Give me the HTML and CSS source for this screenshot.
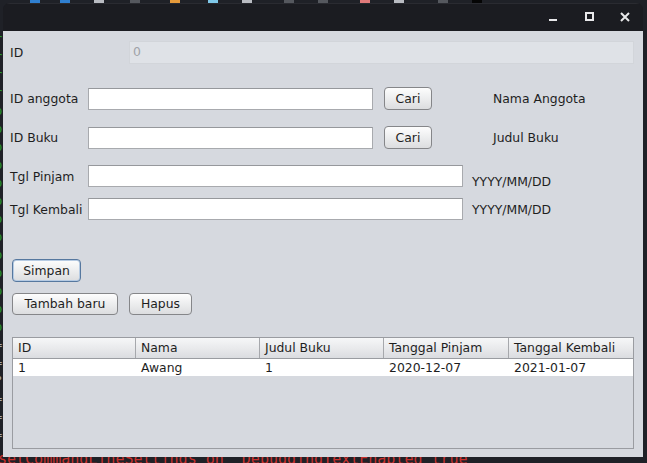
FILE: index.html
```html
<!DOCTYPE html>
<html>
<head>
<meta charset="utf-8">
<link rel="stylesheet" href="styles.css">
</head>
<body>
<div class="topbar">
  <span class="tb-icon blue" style="margin-left:30px"></span>
  <span class="tb-icon blue" style="margin-left:20px"></span>
  <span class="tb-icon grey" style="margin-left:24px"></span>
  <span class="tb-icon dim" style="margin-left:26px"></span>
  <span class="tb-icon orange" style="margin-left:30px"></span>
  <span class="tb-icon cyan" style="margin-left:28px"></span>
  <span class="tb-icon grey" style="margin-left:24px"></span>
  <span class="tb-icon dim" style="margin-left:32px"></span>
  <span class="tb-icon dim" style="margin-left:24px"></span>
  <span class="tb-icon pink" style="margin-left:32px"></span>
  <span class="tb-icon grey" style="margin-left:24px"></span>
  <span class="tb-icon dim" style="margin-left:34px"></span>
  <span class="tb-icon black" style="margin-left:24px"></span>
</div>
<div class="term-left">
  <div class="tl g">r</div><div class="tl g">r</div><div class="tl g">r</div><div class="tl g">r</div>
  <div class="tl g">b</div><div class="tl g">b</div><div class="tl g">b</div><div class="tl g">b</div>
  <div class="tl g">b</div><div class="tl g">b</div><div class="tl g">b</div><div class="tl g">b</div>
  <div class="tl g">b</div><div class="tl g">b</div><div class="tl g">b</div><div class="tl g">b</div>
  <div class="tl g">p</div>
  <div class="tl w">=</div><div class="tl w">=</div><div class="tl w">?</div><div class="tl w">=</div><div class="tl w">=</div><div class="tl w">=</div>
</div>
<div class="term-bottom">setCommandLineSettings on &nbsp;DebuggingTextEnabled true</div>

<div class="window">
  <div class="titlebar">
    <div class="ctl"><span class="ic-min"></span></div>
    <div class="ctl"><span class="ic-max"></span></div>
    <div class="ctl">
      <svg width="10" height="10" viewBox="0 0 10 10"><path d="M1 1L9 9M9 1L1 9" stroke="#e8e8ea" stroke-width="2"/></svg>
    </div>
  </div>
  <div class="content">
    <div class="row row-id">
      <span class="lbl lbl-id">ID</span>
      <div class="field field-disabled">0</div>
    </div>
    <div class="row row-anggota">
      <span class="lbl">ID anggota</span>
      <div class="field field-short"></div>
      <button class="btn btn-cari">Cari</button>
      <span class="info">Nama Anggota</span>
    </div>
    <div class="row row-buku">
      <span class="lbl">ID Buku</span>
      <div class="field field-short"></div>
      <button class="btn btn-cari">Cari</button>
      <span class="info">Judul Buku</span>
    </div>
    <div class="row row-pinjam">
      <span class="lbl">Tgl Pinjam</span>
      <div class="field field-date"></div>
      <span class="hint hint-low">YYYY/MM/DD</span>
    </div>
    <div class="row row-kembali">
      <span class="lbl">Tgl Kembali</span>
      <div class="field field-date"></div>
      <span class="hint">YYYY/MM/DD</span>
    </div>
    <div class="row row-simpan">
      <button class="btn btn-simpan">Simpan</button>
    </div>
    <div class="row row-actions">
      <button class="btn btn-tambah">Tambah baru</button>
      <button class="btn btn-hapus">Hapus</button>
    </div>
    <div class="table">
      <div class="thead">
        <div class="th">ID</div>
        <div class="th">Nama</div>
        <div class="th">Judul Buku</div>
        <div class="th">Tanggal Pinjam</div>
        <div class="th last">Tanggal Kembali</div>
      </div>
      <div class="tr">
        <div class="td">1</div>
        <div class="td">Awang</div>
        <div class="td">1</div>
        <div class="td">2020-12-07</div>
        <div class="td">2021-01-07</div>
      </div>
    </div>
  </div>
</div>
</body>
</html>
```
FILE: styles.css
```css
* { box-sizing: border-box; }

body {
  margin: 0;
  width: 647px;
  height: 463px;
  position: relative;
  overflow: hidden;
  background: #1f2127;
  font-family: "DejaVu Sans", sans-serif;
  font-size: 12.4px;
  color: #1e1e1e;
}

.topbar {
  height: 3px;
  display: flex;
  align-items: stretch;
}
.tb-icon { width: 10px; height: 3px; }
.tb-icon.blue { background: #2f7fd0; }
.tb-icon.grey { background: #b9bcc2; }
.tb-icon.dim { background: #55585e; }
.tb-icon.orange { background: #e59a3a; }
.tb-icon.cyan { background: #7fc8e8; }
.tb-icon.pink { background: #e07a7a; }
.tb-icon.black { background: #050505; }

.term-left {
  position: absolute;
  left: -5px;
  top: 30px;
  font-family: "DejaVu Sans Mono", monospace;
  font-size: 12px;
  line-height: 18px;
}
.tl { height: 18px; }
.tl.g { color: #2a9a2a; }
.tl.w { color: #a8abb0; }

.term-bottom {
  position: absolute;
  left: -2px;
  top: 451px;
  font-family: "DejaVu Sans Mono", monospace;
  font-size: 15px;
  line-height: 16px;
  color: #c8302c;
  white-space: nowrap;
}

.window {
  position: absolute;
  left: 3px;
  top: 3px;
  width: 640px;
  height: 454px;
  display: flex;
  flex-direction: column;
  border-radius: 7px 7px 0 0;
  overflow: hidden;
  background: #1b1c21;
}

.titlebar {
  height: 28px;
  flex: none;
  background: #1b1c21;
  display: flex;
  justify-content: flex-end;
  align-items: stretch;
  border-top: 1px solid #2a2b31;
}
.ctl {
  width: 36px;
  display: flex;
  align-items: center;
  justify-content: center;
  padding-bottom: 2px;
}
.ic-min {
  width: 8px;
  height: 2px;
  background: #e8e8ea;
  margin-top: 7px;
}
.ic-max {
  width: 9px;
  height: 9px;
  border: 2px solid #e8e8ea;
}

.content {
  flex: 1;
  background: #d6d9df;
  padding: 10px 9px 0 7px;
  display: flex;
  flex-direction: column;
}

.row {
  display: flex;
  align-items: center;
  height: 23px;
  flex: none;
}
.lbl { width: 78px; flex: none; }
.lbl-id { width: 119px; }

.field {
  height: 22px;
  background: #ffffff;
  border: 1px solid #a8aaae;
  border-top-color: #96989c;
  flex: none;
}
.field-disabled {
  flex: 1;
  height: 23px;
  background: #dfe2e7;
  border: 1px solid #d2d5da;
  color: #a0a3a8;
  padding-left: 3px;
  line-height: 20px;
}
.field-short { width: 285px; }
.field-date { width: 375px; }

.btn {
  font-family: inherit;
  font-size: 12.4px;
  color: #1e1e1e;
  height: 23px;
  padding: 0;
  border: 1px solid #858689;
  border-radius: 4px;
  background: linear-gradient(#fdfdfd, #eeeff0 45%, #dcdddf);
  flex: none;
}
.btn-cari { width: 48px; margin-left: 11px; }
.info { margin-left: 61px; }
.hint { margin-left: 9px; }
.hint-low { align-self: flex-end; line-height: 14px; margin-bottom: -2px; }

.row-anggota { margin-top: 23px; }
.row-buku { margin-top: 16px; }
.row-pinjam { margin-top: 16px; height: 22px; }
.row-kembali { margin-top: 11px; height: 22px; }
.row-simpan { margin-top: 39px; }
.row-actions { margin-top: 10px; }

.btn-simpan {
  width: 69px;
  margin-left: 2px;
  border-color: #56789f;
  box-shadow: inset 0 0 0 1px #b6cbe3;
}
.btn-tambah { width: 106px; margin-left: 2px; height: 22px; }
.btn-hapus { width: 63px; margin-left: 11px; height: 22px; }

.table {
  margin-top: 22px;
  margin-left: 2px;
  width: 622px;
  height: 112px;
  border: 1px solid #9a9ca1;
  flex: none;
}
.thead, .tr {
  display: grid;
  grid-template-columns: 123px 124px 124px 125px 124px;
}
.thead {
  height: 21px;
  border-bottom: 1px solid #9a9ca1;
  background: linear-gradient(#f6f7f8, #e9eaec 50%, #dadce0);
}
.th {
  padding-left: 5px;
  line-height: 20px;
  border-right: 1px solid #a6a8ac;
}
.th.last { border-right: none; }
.tr {
  height: 17px;
  background: #ffffff;
}
.td {
  padding-left: 5px;
  line-height: 17px;
}
```
